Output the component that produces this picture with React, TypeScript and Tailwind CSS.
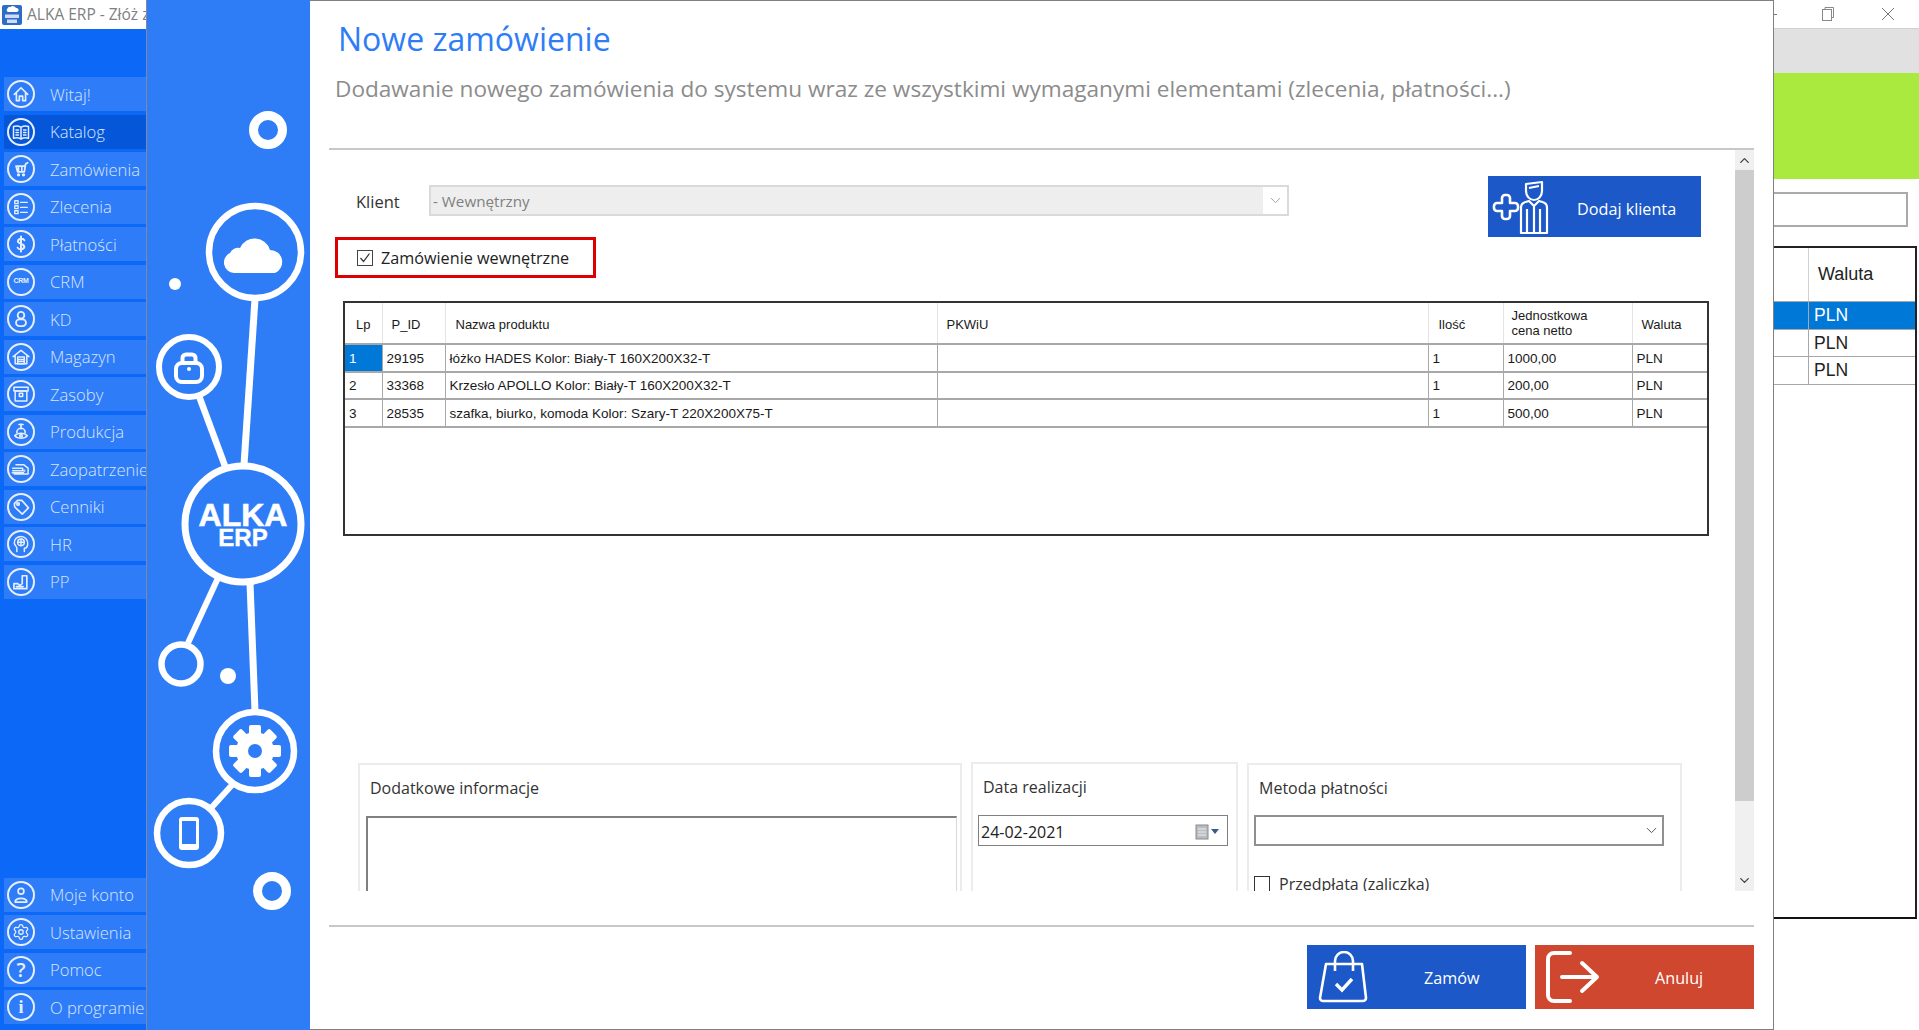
import React from "react";
import { ChevronDown, ChevronUp, Settings } from "lucide-react";

function P({ children, s = 1.8 }: { children: React.ReactNode; s?: number }) {
  return (
    <svg width="20" height="20" viewBox="0 0 24 24" fill="none" stroke="currentColor" strokeWidth={s} strokeLinecap="round" strokeLinejoin="round">
      {children}
    </svg>
  );
}

const top: [string, React.ReactNode][] = [
  ["Witaj!", <P s={2}><path d="M4 12.5L12 4.5l8 8M6.5 10.5V20H10v-5.5h4V20h3.5v-9.5" /></P>],
  ["Katalog", <P><path d="M12 6.5C9 4.5 6 4.5 3 5.5v14c3-1 6-1 9 1 3-2 6-2 9-1v-14c-3-1-6-1-9 1zM12 6.5v14M6 9.5h3M6 12.5h3M6 15.5h3M15 9.5h3M15 12.5h3M15 15.5h3" /></P>],
  ["Zamówienia", <P s={2}><path d="M20 4.5l-2.5 1.5-1.5 9.5H8L6 8.5h11M9 9v6M13 9v6" /><circle cx="9" cy="19" r="1" /><circle cx="15" cy="19" r="1" /></P>],
  ["Zlecenia", <P s={1.6}><rect x="4.5" y="4.5" width="4" height="3.5" /><rect x="4.5" y="10.5" width="4" height="3.5" /><rect x="4.5" y="16.5" width="4" height="3.5" /><path d="M11.5 6.5h8M11.5 12.5h8M11.5 18.5h8" /></P>],
  ["Płatności", <P s={2.4}><path d="M16 7.5C15 5 9 5 8.3 8.5 7.8 12 16 11 16 15.5 15.2 19 9 19 8 16.5M12 3v18" /></P>],
  ["CRM", <span className="text-[7px] font-bold tracking-tighter font-['Liberation_Sans',sans-serif]">CRM</span>],
  ["KD", <P s={2.2}><circle cx="12" cy="7.5" r="4" /><rect x="6" y="12.5" width="12" height="8" rx="4" /></P>],
  ["Magazyn", <P><path d="M2.5 11.5L12 4l9.5 7.5M5 10v10h14V10" /><rect x="8" y="12" width="8" height="8" /><path d="M8 15h8M8 17.5h8" /></P>],
  ["Zasoby", <P><rect x="3.5" y="4" width="17" height="4.5" /><rect x="5" y="8.5" width="14" height="12" /><rect x="10" y="11" width="4" height="4" /></P>],
  ["Produkcja", <P s={2}><path d="M12 2.5V8M9.5 3h5M7 12.5a5 5 0 0 1 10 0" /><path d="M4.5 16.5C8 12.5 16 12.5 19.5 16.5 16 20.5 8 20.5 4.5 16.5z" /><circle cx="12" cy="16.5" r="1.5" /></P>],
  ["Zaopatrzenie", <P><path d="M6 7h9.5l5 4v7H4M2 11h12v3H2M1.5 16.5H15" /><circle cx="16" cy="14" r=".5" /></P>],
  ["Cenniki", <P s={2}><path d="M4 8l4-4h5l8 9-7.5 7.5L4.5 12z" /><circle cx="8.5" cy="8.5" r="1.5" /></P>],
  ["HR", <P><path d="M16 21v-4c4 0 3.5-3 4-4.5C20.5 7 17 3 12 3 7 3 3.5 7 4 11c.2 2.5 3 4 3 6v4" /><circle cx="12" cy="10" r="4" /><path d="M12 6v8M9 10h6" /></P>],
  ["PP", <P s={2}><path d="M3.5 20v-6H8l2.5 2 3-2V4.5h5.5V20zM6.5 17.5h8" /></P>],
];
const bottom: [string, React.ReactNode][] = [
  ["Moje konto", <P s={2}><circle cx="12" cy="7.5" r="3.5" /><path d="M5 20.5c0-6 14-6 14 0z" /></P>],
  ["Ustawienia", <Settings size={18} strokeWidth={1.7} />],
  ["Pomoc", <span className="text-[20px] font-semibold leading-none">?</span>],
  ["O programie", <span className="text-[18px] font-bold leading-none font-['Liberation_Serif',serif]">i</span>],
];

function Item({ label, icon, active }: { label: string; icon: React.ReactNode; active?: boolean }) {
  return (
    <div className={`h-[34px] flex items-center shrink-0 overflow-hidden pl-[3px] ${active ? "bg-[#0556d8]" : "bg-[#2f7cf8]"}`}>
      <div className="w-[28px] h-[28px] rounded-full border-2 border-[#e6effe] flex items-center justify-center shrink-0 text-[#e6effe]">{icon}</div>
      <span className="ml-[15px] mt-[2px] text-[16.6px] font-light text-[#d9e6fd] whitespace-nowrap">{label}</span>
    </div>
  );
}

function Decor() {
  return (
    <svg width="164" height="1030" viewBox="147 0 164 1030" className="block">
      <g fill="none" stroke="#fff">
        <circle cx="268" cy="130" r="14.5" strokeWidth="9" />
        <circle cx="255" cy="252" r="46" strokeWidth="6.5" />
        <circle cx="189" cy="367" r="30" strokeWidth="6" />
        <circle cx="243" cy="524" r="58" strokeWidth="7" />
        <circle cx="181" cy="664" r="19.5" strokeWidth="6.5" />
        <circle cx="255" cy="751" r="39" strokeWidth="6.5" />
        <circle cx="189" cy="833" r="32" strokeWidth="6.5" />
        <circle cx="272" cy="891" r="14.5" strokeWidth="9" />
        <path d="M255 299 L244 465" strokeWidth="7" />
        <path d="M199 396 L225 466" strokeWidth="6.5" />
        <path d="M218 578 L188 643" strokeWidth="6" />
        <path d="M250 583 L255 711" strokeWidth="7" />
        <path d="M232 785 L212 807" strokeWidth="6" />
        <rect x="176" y="363" width="26" height="19" rx="6" strokeWidth="4" />
        <path d="M182.5 363 V358 a3.5 3.5 0 0 1 3.5-3.5 h6 a3.5 3.5 0 0 1 3.5 3.5 V363" strokeWidth="4" />
      </g>
      <g fill="#fff">
        <circle cx="175" cy="284" r="6" />
        <circle cx="228" cy="676" r="8" />
        <circle cx="189" cy="369" r="2" />
        <path d="M234 273 a10.5 10.5 0 0 1-4-20 a9 9 0 0 1 10-5 a16 16 0 0 1 30 2 a12 12 0 0 1 5 23 Z" />
        <rect x="179" y="817" width="20" height="33" rx="3" />
      </g>
      <rect x="182" y="821" width="14" height="23" fill="#2f7df6" />
      <g transform="translate(255 751)">
        <g fill="#fff">
          {[0, 45, 90, 135, 180, 225, 270, 315].map((a) => (
            <rect key={a} x="-6" y="-26" width="12" height="12" rx="2" transform={`rotate(${a})`} />
          ))}
          <circle r="19" />
        </g>
        <circle r="7" fill="#2f7df6" />
      </g>
      <text x="243" y="526" textAnchor="middle" fill="#fff" stroke="#fff" strokeWidth="0.6" fontSize="32" fontWeight="700" fontFamily="'Liberation Sans',sans-serif">ALKA</text>
      <text x="243" y="546" textAnchor="middle" fill="#fff" stroke="#fff" strokeWidth="0.4" fontSize="24" fontWeight="700" fontFamily="'Liberation Sans',sans-serif">ERP</text>
    </svg>
  );
}

const tableCols = ["w-[37px]", "w-[63px]", "w-[492px]", "w-[491px]", "w-[75px]", "w-[129px]", "w-[75px]"];
const rows = [
  ["1", "29195", "łóżko HADES Kolor: Biały-T 160X200X32-T", "", "1", "1000,00", "PLN"],
  ["2", "33368", "Krzesło APOLLO Kolor: Biały-T 160X200X32-T", "", "1", "200,00", "PLN"],
  ["3", "28535", "szafka, biurko, komoda Kolor: Szary-T 220X200X75-T", "", "1", "500,00", "PLN"],
];

function OrderTable() {
  return (
    <div className="ml-[14px] mt-[23px] w-[1366px] h-[235px] border-2 border-[#333] font-['Liberation_Sans',sans-serif] text-[13.5px] text-[#1a1a1a] bg-white">
      <table className="table-fixed border-collapse w-full">
        <colgroup>{tableCols.map((c, i) => <col key={i} className={c} />)}</colgroup>
        <thead>
          <tr className="h-[41px] border-b-2 border-[#a8a8a8] text-[13px] leading-[15px]">
            <th className="font-normal text-left pl-[11px] pt-[2px] border-r border-[#e4e4e4]">Lp</th>
            <th className="font-normal text-left pl-[9px] pt-[2px] border-r border-[#e4e4e4]">P_ID</th>
            <th className="font-normal text-left pl-[10px] pt-[2px] border-r border-[#e4e4e4]">Nazwa produktu</th>
            <th className="font-normal text-left pl-[9px] pt-[2px] border-r border-[#e4e4e4]">PKWiU</th>
            <th className="font-normal text-left pl-[10px] pt-[2px] border-r border-[#e4e4e4]">Ilość</th>
            <th className="font-normal text-left pl-[8px] border-r border-[#e4e4e4]">Jednostkowa<br />cena netto</th>
            <th className="font-normal text-left pl-[9px] pt-[2px]">Waluta</th>
          </tr>
        </thead>
        <tbody>
          {rows.map((r, i) => (
            <tr key={i} className="h-[27.5px] border-b-2 border-[#a8a8a8]">
              {r.map((c, j) => (
                <td key={j} className={`px-[4px] pt-[2px] border-r border-[#a8a8a8] last:border-r-0 whitespace-nowrap overflow-hidden ${i === 0 && j === 0 ? "bg-[#0078d7] text-white" : ""}`}>{c}</td>
              ))}
            </tr>
          ))}
        </tbody>
      </table>
    </div>
  );
}

function Panels() {
  return (
    <div className="flex items-start ml-[29px] mt-[227px] text-[16px] text-[#333]">
      <div className="w-[604px] h-[160px] border-2 border-[#ececec] shrink-0">
        <div className="pl-[10px] pt-[11px] h-[51px]">Dodatkowe informacje</div>
        <div className="ml-[6px] w-[591px] h-[100px] border-t-2 border-l-2 border-r border-t-[#808080] border-l-[#808080] border-r-[#d8d8d8]"></div>
      </div>
      <div className="w-[267px] h-[160px] ml-[9px] -mt-px border-2 border-[#ececec] shrink-0">
        <div className="pl-[10px] pt-[11px] h-[51px]">Data realizacji</div>
        <div className="ml-[5px] w-[250px] h-[31px] border border-[#808080] flex items-center pl-[2px] pt-[2px] text-[#222]">
          24-02-2021
          <svg width="26" height="16" viewBox="0 0 26 16" className="ml-auto mr-[6px]">
            <rect x="1" y="1" width="12" height="14" fill="#b8bcc4" stroke="#8a8a8a" />
            <path d="M3 5h8M3 8h8M3 11h8" stroke="#eee" />
            <path d="M16 5h8l-4 5z" fill="#3b5a8c" />
          </svg>
        </div>
      </div>
      <div className="w-[435px] h-[160px] ml-[9px] border-2 border-[#ececec] shrink-0">
        <div className="pl-[10px] pt-[11px] h-[50px]">Metoda płatności</div>
        <div className="ml-[5px] w-[410px] h-[31px] border-2 border-[#909090] flex items-center justify-end pr-[2px]">
          <ChevronDown size={17} strokeWidth={1.4} className="text-[#555]" />
        </div>
        <div className="ml-[5px] mt-[26px] flex items-center">
          <span className="w-[16px] h-[16px] border border-[#333] shrink-0"></span>
          <span className="ml-[9px]">Przedpłata (zaliczka)</span>
        </div>
      </div>
    </div>
  );
}

export default function App() {
  return (
    <div className="w-[1919px] h-[1030px] flex overflow-hidden bg-white font-['Open_Sans',sans-serif]">
      {/* window behind: left */}
      <div className="w-[146px] shrink-0 flex flex-col">
        <div className="h-[29px] bg-white flex items-center overflow-hidden whitespace-nowrap pl-[2px]">
          <svg width="20" height="20" viewBox="0 0 20 20" className="shrink-0">
            <rect width="20" height="20" rx="2" fill="#2f6cc8" />
            <path d="M6 7a2 2 0 0 1-.5-3.500 a2.500 2.500 0 0 1 3-1.500 a3.500 3.500 0 0 1 5.500 1 a2 2 0 0 1 1 4z" fill="#fff" />
            <rect x="3" y="9.5" width="14" height="3.5" fill="#cfdcf5" />
            <rect x="5" y="14.5" width="10" height="3.5" fill="#cfdcf5" />
          </svg>
          <span className="ml-[5px] text-[15.5px] text-[#808080]">ALKA ERP - Złóż zamówienie</span>
        </div>
        <div className="flex-1 bg-[#0c68f6] pt-[48px] pb-[6px] pl-[4px] flex flex-col gap-[3.5px]">
          {top.map(([l, i]) => <Item key={l} label={l} icon={i} active={l === "Katalog"} />)}
          <div className="mt-auto flex flex-col gap-[3.5px]">
            {bottom.map(([l, i]) => <Item key={l} label={l} icon={i} />)}
          </div>
        </div>
      </div>

      {/* dialog */}
      <div className="w-[1628px] shrink-0 flex border-l border-[#7d8aa0]">
        <div className="w-[163px] shrink-0 bg-[#2f7df6] overflow-hidden"><Decor /></div>
        <div className="flex-1 min-w-0 flex flex-col bg-white border-t border-r border-b border-[#808080] pl-[19px] pr-[19px]">
          <div className="h-[149px] shrink-0 border-b-2 border-[#c8c8c8]">
            <div className="pl-[9px] pt-[15px] text-[32px] leading-[46px] text-[#2f7df6]">Nowe zamówienie</div>
            <div className="pl-[6px] mt-[11px] text-[22.6px] leading-[32px] text-[#8c8c8c] whitespace-nowrap">Dodawanie nowego zamówienia do systemu wraz ze wszystkimi wymaganymi elementami (zlecenia, płatności...)</div>
          </div>
          <div className="h-[741px] shrink-0 flex">
            <div className="flex-1 min-w-0 overflow-hidden">
              <div className="flex items-start">
                <div className="w-[1159px] shrink-0 pt-[35px]">
                  <div className="flex items-center">
                    <span className="ml-[27px] mt-[4px] w-[73px] text-[16.5px] text-[#333]">Klient</span>
                    <div className="w-[860px] h-[31px] border-2 border-[#dadada] flex items-center text-[15.2px] text-[#808080]">
                      <div className="flex-1 h-full bg-[#eeeeee] pl-[2px] leading-[28px]">- Wewnętrzny</div>
                      <div className="w-[24px] flex justify-center"><ChevronDown size={17} strokeWidth={1.3} className="text-[#999]" /></div>
                    </div>
                  </div>
                  <div className="ml-[6px] mt-[21px] w-[261px] h-[41px] border-[3px] border-[#dc0000] flex items-center pl-[19px] text-[16.2px] text-[#222]">
                    <svg width="16" height="16" viewBox="0 0 16 16" className="shrink-0">
                      <rect x="0.5" y="0.5" width="15" height="15" fill="#fff" stroke="#444" />
                      <path d="M3.5 8l3 3.500 6-8" fill="none" stroke="#333" strokeWidth="1.2" />
                    </svg>
                    <span className="ml-[8px] mt-[2px] whitespace-nowrap">Zamówienie wewnętrzne</span>
                  </div>
                </div>
                <div className="h-[61px] w-[213px] mt-[26px] bg-[#1c58c7] flex items-center text-white text-[16.2px] shrink-0">
                  <svg width="64" height="61" viewBox="0 0 64 61" fill="none" stroke="#fff" strokeWidth="2.2" strokeLinejoin="round" className="shrink-0">
                    <path d="M14 27V22a3 3 0 0 1 3-3h2a3 3 0 0 1 3 3V27h5a3 3 0 0 1 3 3v2a3 3 0 0 1-3 3h-5v5a3 3 0 0 1-3 3h-2a3 3 0 0 1-3-3v-5H9a3 3 0 0 1-3-3v-2a3 3 0 0 1 3-3z" strokeWidth="2.6" />
                    <path d="M38 8L54 6V15a8 9 0 0 1-16 0zM41 12l10-2" />
                    <path d="M33 57V32a6 6 0 0 1 4.500-6l3.500-1 5 5 5-5 3.500 1a6 6 0 0 1 4.500 6V57zM39 33V57M46 30V57M52 33V57" />
                  </svg>
                  <span className="ml-[25px] mt-[6px] whitespace-nowrap">Dodaj klienta</span>
                </div>
              </div>
              <OrderTable />
              <Panels />
            </div>
            <div className="w-[19px] shrink-0 flex flex-col bg-[#f0f0f0]">
              <div className="h-[20px] flex items-center justify-center"><ChevronUp size={15} strokeWidth={2.2} className="text-[#444]" /></div>
              <div className="h-[631px] bg-[#cdcdcd]"></div>
              <div className="flex-1 flex items-end justify-center pb-[3px]"><ChevronDown size={15} strokeWidth={2.2} className="text-[#444]" /></div>
            </div>
          </div>
          <div className="mt-[34px] border-t-2 border-[#c8c8c8] pt-[18px] flex justify-end gap-[9px] text-[16.2px] text-white">
            <div className="w-[219px] h-[64px] bg-[#1c58c7] flex items-center">
              <svg width="52" height="52" viewBox="0 0 52 52" fill="none" stroke="#fff" strokeWidth="2.6" className="ml-[11px] shrink-0">
                <path d="M8 13h36l4 34a3 3 0 0 1-3 3H5a3 3 0 0 1-3-3z" strokeLinejoin="round" />
                <path d="M17 20V10a9 9 0 0 1 18 0v10" />
                <path d="M18 33l6 6 10-11" strokeWidth="3.4" />
              </svg>
              <span className="ml-[54px] mt-[2px]">Zamów</span>
            </div>
            <div className="w-[219px] h-[64px] bg-[#cf472e] flex items-center">
              <svg width="54" height="52" viewBox="0 0 54 52" fill="none" stroke="#fff" strokeWidth="4" className="ml-[11px] shrink-0">
                <path d="M24 2H8a6 6 0 0 0-6 6v36a6 6 0 0 0 6 6h16" strokeLinecap="round" />
                <path d="M16 26h34M36 12l15 14-15 14" strokeLinecap="round" strokeLinejoin="round" />
              </svg>
              <span className="ml-[55px] mt-[2px]">Anuluj</span>
            </div>
          </div>
        </div>
      </div>

      {/* window behind: right */}
      <div className="flex-1 min-w-0 flex flex-col font-['Liberation_Sans',sans-serif] text-[#222]">
        <div className="h-[29px] shrink-0 flex items-center bg-white border-b border-[#d0d0d0] text-[#666]">
          <span className="w-[3px] h-px bg-[#777] mr-auto"></span>
          <svg width="12" height="14" viewBox="0 0 12 14" fill="none" stroke="#888" className="mr-[47px]">
            <rect x="0.5" y="2.5" width="9" height="11" />
            <path d="M3 2.5V.5h8.5v10H9.5" />
          </svg>
          <svg width="14" height="14" viewBox="0 0 14 14" fill="none" stroke="#777" className="mr-[24px]"><path d="M1 1l12 12M13 1L1 13" /></svg>
        </div>
        <div className="h-[44px] shrink-0 bg-[#e1e1e1]"></div>
        <div className="h-[106px] shrink-0 bg-[#aaea3f]"></div>
        <div className="h-[35px] w-[134px] mt-[13px] shrink-0 border-2 border-l-0 border-[#aaaaaa] bg-white"></div>
        <div className="w-[143px] h-[673px] mt-[19px] shrink-0 border-2 border-l-0 border-[#222] border-b-[#111] text-[18px]">
          <div className="h-[54px] flex border-b border-[#a8a8a8]">
            <div className="w-[35px] border-r border-[#d0d0d0]"></div>
            <div className="pl-[9px] flex items-center">Waluta</div>
          </div>
          {[0, 1, 2].map((i) => (
            <div key={i} className={`h-[27.5px] flex border-b border-[#a8a8a8] ${i === 0 ? "bg-[#0078d7] text-white" : ""}`}>
              <div className="w-[35px] border-r border-[#a8a8a8]"></div>
              <div className="pl-[5px] leading-[27px] text-[17.5px]">PLN</div>
            </div>
          ))}
        </div>
      </div>
    </div>
  );
}
